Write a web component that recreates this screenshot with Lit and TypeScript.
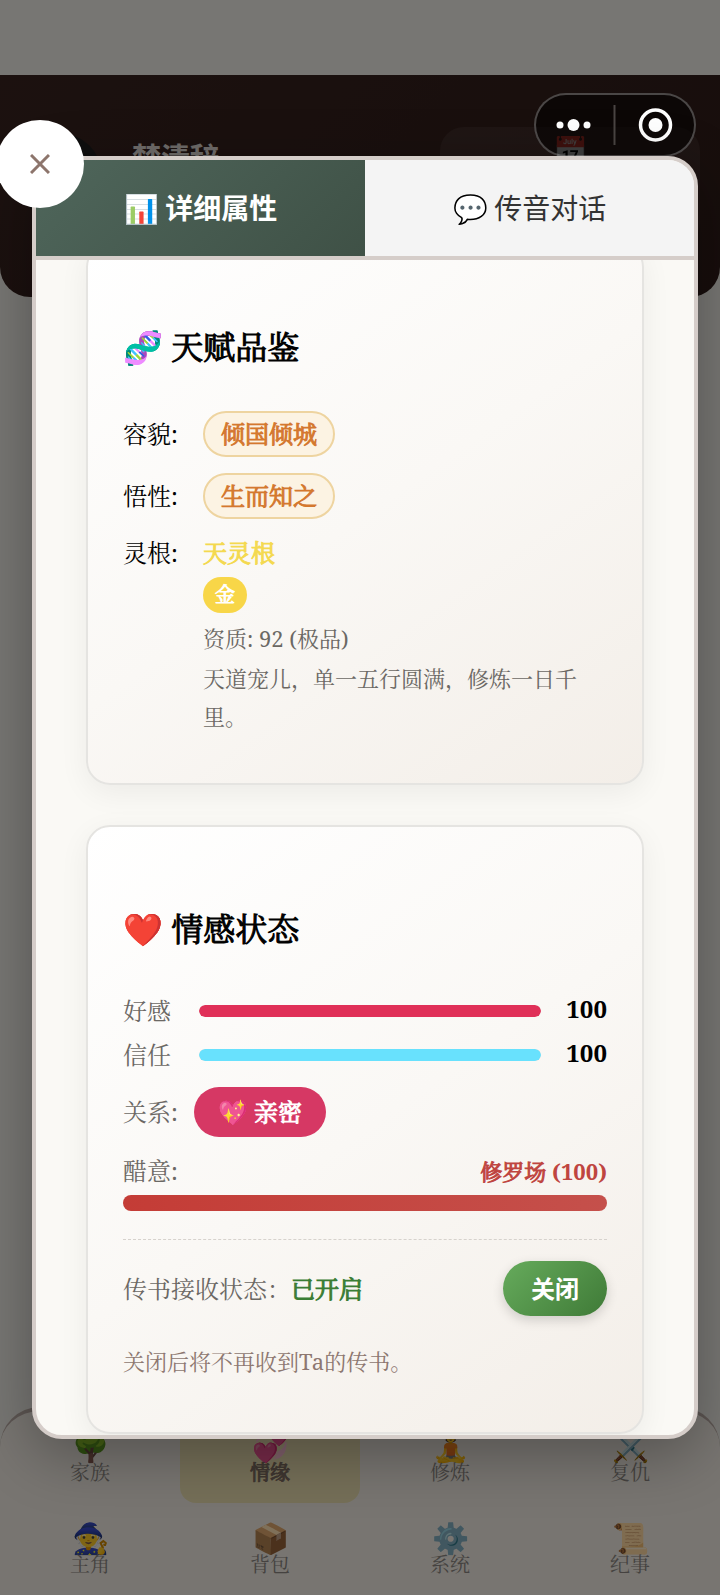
import { LitElement, html, css, svg } from "lit";
import { customElement, property, query, state } from "lit/decorators.js";
import { classMap } from "lit/directives/class-map.js";
import { styleMap } from "lit/directives/style-map.js";

const NAV = [
  { icon: "🌳", label: "家族" },
  { icon: "💞", label: "情缘", active: true },
  { icon: "🧘", label: "修炼" },
  { icon: "⚔️", label: "复仇" },
  { icon: "🧙", label: "主角" },
  { icon: "📦", label: "背包" },
  { icon: "⚙️", label: "系统" },
  { icon: "📜", label: "纪事" },
];

@customElement("stat-bar")
class StatBar extends LitElement {
  @property() label = "";
  @property({ type: Number }) value = 0;
  @property() color = "";

  static styles = css`
    :host {
      display: grid;
      grid-template-columns: 60px 1fr 50px;
      align-items: center;
      column-gap: 16px;
      min-height: 36px;
      line-height: 36px;
    }
    .label { color: #6b6864; }
    .track { height: 12px; border-radius: 6px; background: #e8e4df; overflow: hidden; }
    .fill { height: 100%; border-radius: 6px; }
    .value { font-weight: 700; line-height: 32px; padding-bottom: 4px; text-align: right; color: #000; }
  `;

  render() {
    return html`
      <span class="label" id="l">${this.label}</span>
      <div class="track" role="progressbar" aria-labelledby="l" aria-valuenow=${this.value}>
        <div class="fill" style=${styleMap({ width: `${this.value}%`, background: this.color })}></div>
      </div>
      <span class="value">${this.value}</span>
    `;
  }
}

@customElement("app-root")
class AppRoot extends LitElement {
  @state() tab = 0;
  @query(".body") body!: HTMLElement;

  static styles = css`
    :host {
      display: block;
      position: relative;
      min-height: 100vh;
      overflow: hidden;
      --serif: "Noto Serif", "Noto Serif CJK SC", "Noto Serif SC", "Liberation Serif", "Noto Sans CJK SC", serif;
      --sans: "Noto Sans CJK SC", sans-serif;
      font-family: var(--serif);
      font-size: 24px;
      color: #000;
    }
    * { box-sizing: border-box; }
    button { font: inherit; border: 0; margin: 0; padding: 0; cursor: pointer; }

    .page {
      display: flex;
      flex-direction: column;
      justify-content: space-between;
      min-height: 100vh;
      padding-top: 75px;
      background: #efede6;
    }
    .top {
      display: flex;
      align-items: flex-start;
      gap: 30px;
      height: 222px;
      padding: 52px 20px 0 16px;
      border-radius: 0 0 30px 30px;
      background: linear-gradient(135deg, #38231f, #2e1b18);
      color: #ddd7d3;
      font-family: var(--sans);
    }
    .avatar { width: 86px; height: 86px; margin-top: 6px; border-radius: 50%; background: #1c1c1c; }
    .name { flex: 1; font-size: 29px; line-height: 44px; font-weight: 700; margin-top: 7px; }
    .date {
      width: 260px;
      height: 120px;
      border-radius: 24px;
      background: rgba(255, 255, 255, 0.06);
      font-size: 28px;
      line-height: 44px;
      text-align: center;
    }

    .nav {
      display: grid;
      grid-template-columns: repeat(4, 1fr);
      border-top: 4px solid #b9aaa4;
      border-radius: 40px 40px 0 0;
      background: #f0ebe3;
    }
    .item {
      display: flex;
      flex-direction: column;
      align-items: center;
      height: 92px;
      padding-top: 19px;
      color: #8a8580;
      background: none;
      font-size: 20px;
      border-radius: 16px;
    }
    .item .glyph { font-size: 30px; line-height: 31px; }
    .item .text { line-height: 24px; }
    .item.active { background: #ebdfb0; color: #7d6c60; }

    .overlay {
      position: absolute;
      inset: 0;
      display: flex;
      padding: 156px 22px 156px 32px;
      background: rgba(0, 0, 0, 0.5);
    }
    .capsule {
      position: absolute;
      top: 93px;
      right: 24px;
      width: 162px;
      height: 64px;
      border: 2px solid rgba(255, 255, 255, 0.26);
      border-radius: 32px;
      background: rgba(0, 0, 0, 0.5);
    }
    .capsule svg { display: block; width: 100%; height: 100%; }

    .modal {
      position: relative;
      flex: 1;
      min-width: 0;
      display: flex;
      flex-direction: column;
      border: 4px solid #d5cdc9;
      border-radius: 30px;
      background: #faf9f5;
      box-shadow: 0 16px 60px rgba(0, 0, 0, 0.3);
    }
    .close {
      position: absolute;
      top: -40px;
      left: -40px;
      width: 88px;
      height: 88px;
      border-radius: 50%;
      background: #fff;
      display: grid;
      place-items: center;
    }
    .tabs {
      display: grid;
      grid-template-columns: 1fr 1fr;
      flex: none;
      border-bottom: 4px solid #d5cdc9;
      border-radius: 26px 26px 0 0;
      overflow: hidden;
    }
    .tab {
      height: 96px;
      padding-bottom: 2px;
      font-family: var(--sans);
      font-size: 28px;
      color: #333;
      background: #f4f4f4;
    }
    .tab.on {
      color: #fff;
      font-weight: 700;
      background: linear-gradient(135deg, #4f665b, #3f5146);
    }
    .body {
      flex: 1;
      min-height: 0;
      overflow-y: auto;
      scrollbar-width: none;
      border-radius: 0 0 26px 26px;
      padding: 50px;
      display: flex;
      flex-direction: column;
      gap: 40px;
    }
    .card {
      flex: none;
      padding: 36px 35px;
      border: 2px solid #e5e4e1;
      border-radius: 24px;
      background: linear-gradient(145deg, #fff, #faf8f5 50%, #f3eee8);
      box-shadow: 0 8px 30px rgba(0, 0, 0, 0.06);
    }
    h3 { margin: 40px 0 38px; font-size: 32px; line-height: 52px; }

    /* Even-stroked bold for the Song-style characters. */
    h3, .rank, .root, .element, .bond, .jealous, .open, .item.active {
      font-weight: 400;
      -webkit-text-stroke: 1px currentColor;
    }
    .jealous b { -webkit-text-stroke: 0; }

    .traits {
      display: grid;
      grid-template-columns: 64px 1fr;
      gap: 16px;
      margin: 0 0 12px;
    }
    dt, dd { margin: 0; line-height: 36px; }
    dt { white-space: nowrap; }
    .traits dt.mid { align-self: center; }
    .rank {
      display: inline-block;
      vertical-align: top;
      padding: 3px 16px;
      border: 2px solid #eed4a0;
      border-radius: 23px;
      background: #fcf3e3;
      color: #d4782f;
    }
    .root { color: #f4d94f; }
    .element {
      display: table;
      margin: 6px 0 7px;
      padding: 0 12px;
      border-radius: 18px;
      background: #f8d648;
      color: #fff;
      font-size: 20px;
    }
    .small { font-size: 22px; color: #6b6864; }
    .desc { line-height: 38px; margin-top: 3px; }

    .bars { display: grid; row-gap: 8px; }
    .row { display: flex; align-items: center; gap: 16px; line-height: 36px; color: #6b6864; }
    .row.apart { justify-content: space-between; }
    .relation { margin: 14px 0 16px; }
    .bond {
      padding: 7px 24px;
      border-radius: 25px;
      background: #d63864;
      color: #fff;
    }
    .jealous { font-size: 22px; color: #bf4540; }
    .jbar { height: 16px; margin-top: 6px; border-radius: 8px; background: #e8e4df; overflow: hidden; }
    .jfill { height: 100%; background: linear-gradient(90deg, #c43c36, #c5504b); }
    .letters { margin-top: 28px; padding-top: 21px; border-top: 1px dashed #d6d2cd; }
    .open { color: #3a7d34; }
    .toggle {
      padding: 9px 28px 10px;
      border-radius: 28px;
      background: linear-gradient(135deg, #66ab5c, #3f7a37);
      color: #fff;
      font-family: var(--sans);
      font-weight: 700;
      box-shadow: 0 4px 12px rgba(0, 0, 0, 0.16);
    }
    .note { margin: 26px 0 16px; font-size: 22px; line-height: 38px; color: #8d7770; }
  `;

  firstUpdated() {
    this.body.scrollTop = 67;
  }

  private renderTalent() {
    return html`
      <section class="card">
        <h3>🧬 天赋品鉴</h3>
        <dl class="traits">
          <dt class="mid">容貌:</dt>
          <dd><span class="rank">倾国倾城</span></dd>
          <dt class="mid">悟性:</dt>
          <dd><span class="rank">生而知之</span></dd>
          <dt>灵根:</dt>
          <dd>
            <div class="root">天灵根</div>
            <div class="element">金</div>
            <div class="small">资质: 92 (极品)</div>
            <div class="small desc">天道宠儿，单一五行圆满，修炼一日千里。</div>
          </dd>
        </dl>
      </section>
    `;
  }

  private renderMood() {
    return html`
      <section class="card">
        <h3>❤️ 情感状态</h3>
        <div class="bars">
          <stat-bar label="好感" value="100" color="#e03058"></stat-bar>
          <stat-bar label="信任" value="100" color="#68e1fd"></stat-bar>
        </div>
        <div class="row relation">
          <span>关系:</span>
          <span class="bond">💖 亲密</span>
        </div>
        <div class="row apart">
          <span>醋意:</span>
          <span class="jealous">修罗场 <b>(100)</b></span>
        </div>
        <div class="jbar" role="progressbar" aria-label="醋意" aria-valuenow="100">
          <div class="jfill" style=${styleMap({ width: "100%" })}></div>
        </div>
        <div class="row apart letters">
          <span>传书接收状态：<b class="open">已开启</b></span>
          <button class="toggle">关闭</button>
        </div>
        <p class="note">关闭后将不再收到Ta的传书。</p>
      </section>
    `;
  }

  render() {
    return html`
      <div class="page">
        <header class="top">
          <div class="avatar"></div>
          <div class="name">梦清辞</div>
          <div class="date">📅</div>
        </header>
        <nav class="nav">
          ${NAV.map(
            (n) => html`<button class=${classMap({ item: true, active: !!n.active })}>
              <span class="glyph">${n.icon}</span><span class="text">${n.label}</span>
            </button>`
          )}
        </nav>
      </div>
      <div class="overlay">
        <div class="capsule">
          <svg viewBox="0 0 158 60" aria-hidden="true">
            <g fill="#fff">
              <circle cx="24" cy="30" r="3.500" />
              <circle cx="37.500" cy="30" r="6" />
              <circle cx="51" cy="30" r="3.500" />
              <circle cx="119.500" cy="30" r="7" />
            </g>
            <path d="M78.500 10v40" stroke="#4a4543" stroke-width="2" />
            <circle cx="119.500" cy="30" r="15" fill="none" stroke="#fff" stroke-width="3.500" />
          </svg>
        </div>
        <div class="modal" role="dialog">
          <div class="tabs" role="tablist">
            ${["📊 详细属性", "💬 传音对话"].map(
              (t, i) => html`<button
                role="tab"
                class=${classMap({ tab: true, on: this.tab === i })}
                @click=${() => (this.tab = i)}
              >${t}</button>`
            )}
          </div>
          <div class="body">${this.renderTalent()}${this.renderMood()}</div>
          <button class="close" aria-label="关闭窗口">
            <svg width="20" height="20" viewBox="0 0 20 20" aria-hidden="true">
              ${svg`<path d="M1 1l18 18M19 1L1 19" stroke="#8d756c" stroke-width="3" fill="none" />`}
            </svg>
          </button>
        </div>
      </div>
    `;
  }
}
